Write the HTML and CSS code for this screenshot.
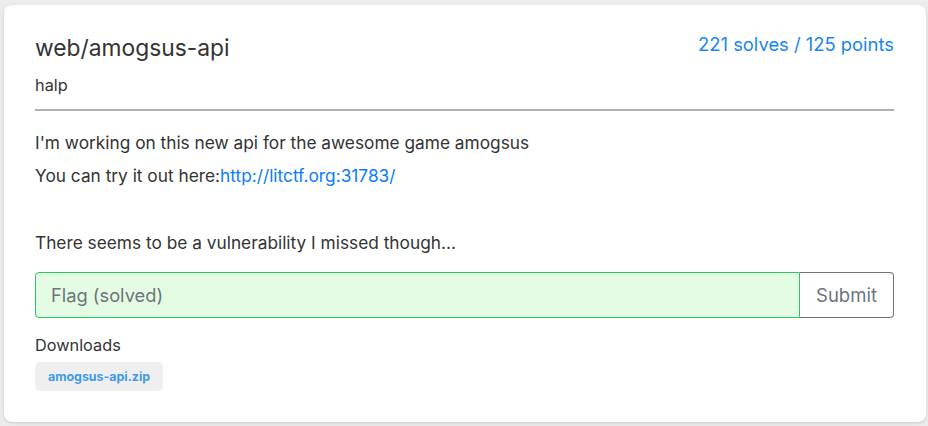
FILE: index.html
```html
<!DOCTYPE html>
<html>
<head>
<meta charset="utf-8">
<link rel="stylesheet" href="styles.css">
</head>
<body>
<div class="card">
  <div class="head">
    <div>
      <h1 class="title">web/amogsus-api</h1>
      <div class="author">halp</div>
    </div>
    <div class="stats">221 solves / 125 points</div>
  </div>
  <hr class="rule">
  <div class="desc">
    <p>I'm working on this new api for the awesome game amogsus</p>
    <p>You can try it out here:<a href="#">http://litctf.org:31783/</a></p>
    <p class="gap">There seems to be a vulnerability I missed though...</p>
  </div>
  <form class="flagform">
    <input class="flag" type="text" placeholder="Flag (solved)">
    <button class="submit" type="button">Submit</button>
  </form>
  <div class="dl-label">Downloads</div>
  <a class="dl" href="#">amogsus-api.zip</a>
</div>
</body>
</html>
```

FILE: styles.css
```css
html, body { margin: 0; padding: 0; }
body {
  background: #ececec;
  font-family: Inter, "Noto Sans", sans-serif;
  color: #333;
  padding: 5px 2px 4px 4px;
}
.card {
  background: #fff;
  border-radius: 8px;
  box-shadow: 0 1px 3px rgba(0,0,0,0.15);
  padding: 27px 32px 31px 31px;
  height: 417px;
  box-sizing: border-box;
}
.head {
  display: flex;
  justify-content: space-between;
  align-items: flex-start;
}
.title {
  margin: 0;
  font-size: 22.8px;
  font-weight: 400;
  line-height: 32px;
  color: #333;
}
.author {
  margin-top: 12px;
  font-size: 16.3px;
  line-height: 18px;
}
.stats {
  color: #1a86f0;
  font-size: 18.4px;
  line-height: 20px;
  margin-top: 2px;
}
.rule {
  border: 0;
  border-top: 2px solid #b0b0b0;
  margin: 15px 0 22px;
}
.desc p {
  margin: 0 0 13px;
  font-size: 17.3px;
  line-height: 20px;
}
.desc a { color: #0a7cff; text-decoration: none; }
.desc .gap { margin-top: 47px; margin-bottom: 0; }
.flagform {
  display: flex;
  margin-top: 19px;
}
.flag {
  flex: 1;
  height: 46px;
  box-sizing: border-box;
  border: 1px solid #2bc85a;
  border-radius: 4px 0 0 4px;
  background: #e4fce4;
  font-family: inherit;
  font-size: 18.3px;
  padding: 0 15px;
  outline: none;
}
.flag::placeholder { color: #6d747a; }
.submit {
  height: 46px;
  width: 94px;
  box-sizing: border-box;
  border: 1px solid #6c757d;
  border-left: none;
  border-radius: 0 4px 4px 0;
  background: #fff;
  color: #6c757d;
  font-family: inherit;
  font-size: 18.5px;
}
.dl-label {
  margin-top: 18px;
  font-size: 16.3px;
  line-height: 18px;
}
.dl {
  display: inline-block;
  margin-top: 8px;
  background: #efefef;
  color: #3d9be9;
  font-weight: 700;
  font-size: 12.4px;
  line-height: 29px;
  padding: 0 13px;
  border-radius: 5px;
  text-decoration: none;
}
```
